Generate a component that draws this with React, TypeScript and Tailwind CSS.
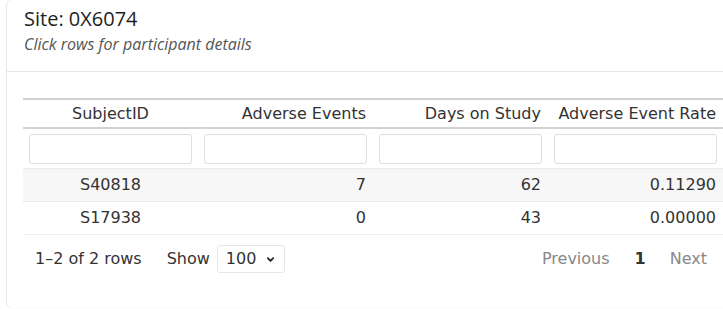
import React from 'react';

const rows = [
  { id: 'S40818', ae: 7, days: 62, rate: '0.11290' },
  { id: 'S17938', ae: 0, days: 43, rate: '0.00000' },
];

const headers = ['SubjectID', 'Adverse Events', 'Days on Study', 'Adverse Event Rate'];

const App: React.FC = () => {
  return (
    <div className="w-[723px] h-[309px] overflow-hidden bg-white">
      {/* CARD */}
      <div className="ml-[6px] w-[760px] h-[308px] rounded-l-[6px] border border-[#e8e8e8] border-t-0 border-b-0 bg-white shadow-[0_0_2px_rgba(0,0,0,0.06)]">

        {/* HEADER */}
        <div className="pl-[17px] pt-[5px] pb-[16px] border-b border-[#e6e6e6] font-['Open_Sans',sans-serif]">
          <h1 className="text-[20px] leading-[28px] text-[#1f1f1f]">Site: 0X6074</h1>
          <p className="text-[16px] leading-[22px] italic text-[#555]">Click rows for participant details</p>
        </div>

        {/* TABLE */}
        <div className="pl-[16px] pt-[26px] font-['DejaVu_Sans',sans-serif] text-[16px] text-[#333]">
          <table className="w-[700px] table-fixed border-collapse">
            <thead>
              <tr className="border-t-2 border-b-2 border-[#d2d2d2]">
                {headers.map((h, i) => (
                  <th
                    key={h}
                    className={`h-[29px] px-[7px] pt-[1px] font-normal leading-[20px] ${i === 0 ? 'text-center' : 'text-right'}`}
                  >
                    {h}
                  </th>
                ))}
              </tr>
              <tr className="border-b border-[#ececec]">
                {headers.map((h) => (
                  <th key={h} className="px-[6px] pt-[5px] pb-[4px] font-normal">
                    <input className="block w-full h-[30px] rounded-[3px] border border-[#dedede] bg-white" />
                  </th>
                ))}
              </tr>
            </thead>
            <tbody>
              {rows.map((r, idx) => (
                <tr key={r.id} className={`border-b border-[#ececec] leading-[20px] ${idx === 0 ? 'bg-[#f7f7f7]' : 'bg-white'}`}>
                  <td className="h-[33px] px-[7px] text-center">{r.id}</td>
                  <td className="px-[7px] text-right">{r.ae}</td>
                  <td className="px-[7px] text-right">{r.days}</td>
                  <td className="px-[7px] text-right">{r.rate}</td>
                </tr>
              ))}
            </tbody>
          </table>

          {/* FOOTER */}
          <div className="w-[700px] h-[48px] flex items-center justify-between pl-[12px] pr-[16px]">
            <div className="flex items-center">
              <span>1–2 of 2 rows</span>
              <span className="ml-[25px]">Show</span>
              <div className="ml-[7px] w-[68px] h-[28px] flex items-center justify-between pl-[8px] pr-[9px] rounded-[3px] border border-[#e6e6e6]">
                <span>100</span>
                <svg width="9" height="9" viewBox="0 0 10 10" className="mt-[1px]">
                  <path d="M2 3.5 L5 6.5 L8 3.5" fill="none" stroke="#222" strokeWidth="2" strokeLinecap="round" strokeLinejoin="round" />
                </svg>
              </div>
            </div>
            <div className="flex items-center">
              <span className="text-[#888]">Previous</span>
              <span className="ml-[25px] font-bold text-[#333]">1</span>
              <span className="ml-[24px] text-[#888]">Next</span>
            </div>
          </div>
        </div>

      </div>
    </div>
  );
};

export default App;
